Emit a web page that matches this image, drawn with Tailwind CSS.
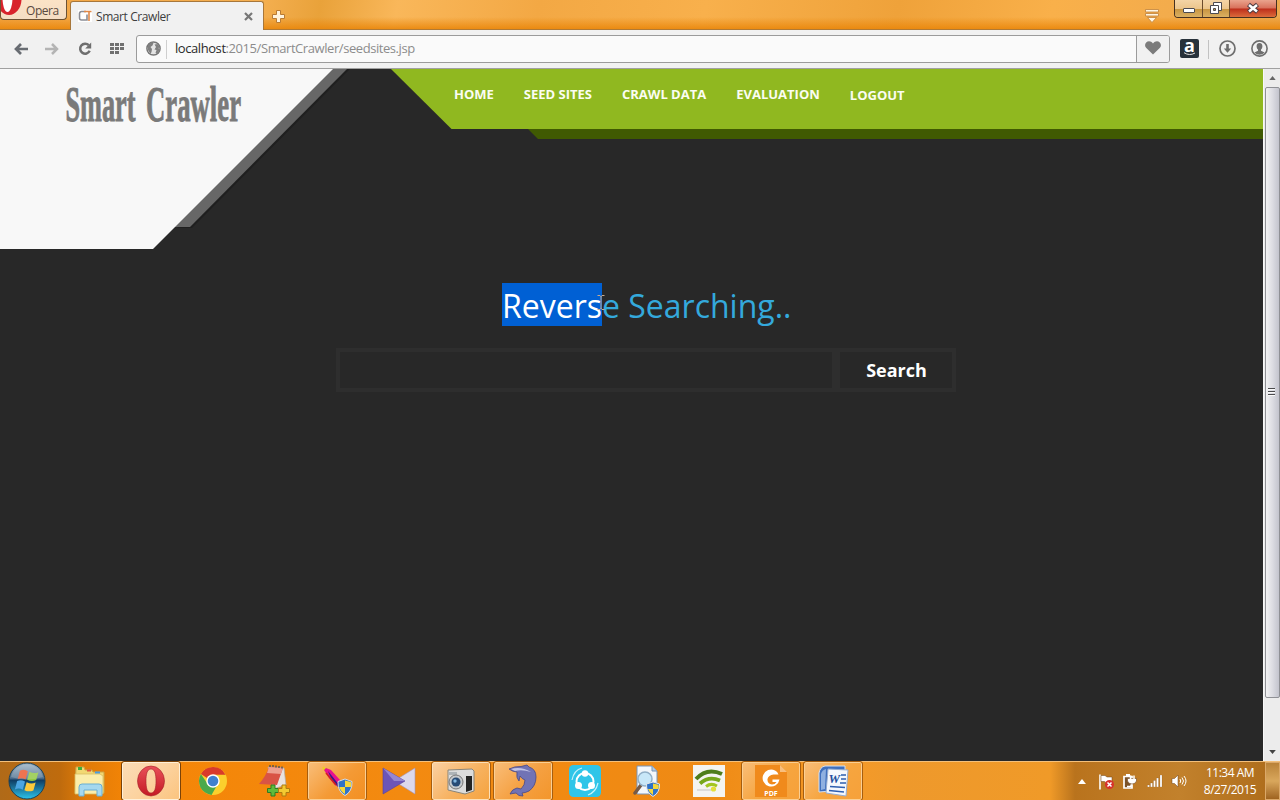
<!DOCTYPE html>
<html lang="en">
<head>
<meta charset="utf-8">
<title>Smart Crawler</title>
<script src="https://cdn.jsdelivr.net/npm/@tailwindcss/browser@4"></script>
</head>
<body class="w-[1280px] h-[800px] overflow-hidden flex flex-col bg-[#282828] font-['Open_Sans','Noto_Sans',sans-serif]">

<!-- Title bar -->
<header class="h-[30px] shrink-0 flex items-start border-b border-[#b07a35] bg-[linear-gradient(100deg,#f2a544_0%,#f5b052_20%,#e9a23a_25%,#f9b75a_31%,#f3a844_42%,#f8b04c_55%,#efa23a_70%,#f9b04a_82%,#eda84e_100%)] relative">
  <div class="absolute inset-x-0 bottom-0 h-[12px] bg-linear-to-b from-[#ee8c14]/0 to-[#e98508]/85"></div>
  <div class="relative w-[67px] h-[20px] rounded-b-[4px] border border-t-0 border-[#6d5233] bg-linear-to-b from-[#fbe3c6] to-[#f4ddc3] overflow-hidden flex items-center">
    <svg class="w-[22px] h-[20px] shrink-0" viewBox="0 0 22 20"><ellipse cx="8" cy="-1" rx="12.500" ry="16" fill="#d8232c"/><ellipse cx="6.500" cy="-2" rx="5" ry="14" fill="#fff"/></svg>
    <span class="text-[12px] leading-[20px] ml-[3px] mt-[2px] tracking-[-0.45px] text-[#5a4a40]">Opera</span>
  </div>
  <div class="relative ml-[3px] mt-[1px] w-[194px] h-[29px] rounded-t-[3px] border border-b-0 border-[#a8773a] bg-[#f1f1f1] flex items-center">
    <svg class="ml-[7px] w-[14px] h-[12px] shrink-0" viewBox="0 0 14 12"><path fill="#fff" d="M0 0h14v12H0z"/><path d="M8 1.500H3.500a2 2 0 0 0-2 2v4.500a2 2 0 0 0 2 2H9V4.500" fill="none" stroke="#8b8d95" stroke-width="1.600"/><path d="M6 1.500h7.500M11 1.500v9.500" fill="none" stroke="#e08948" stroke-width="1.600"/></svg>
    <span class="ml-[4px] text-[12px] leading-[16px] tracking-[-0.42px] text-[#3d3d3d] whitespace-nowrap mt-[2px]">Smart Crawler</span>
    <svg class="ml-auto mr-[10px] w-[9px] h-[9px]" viewBox="0 0 9 9"><path d="M1 1l7 7M8 1L1 8" stroke="#777" stroke-width="2.200"/></svg>
  </div>
  <svg class="relative ml-[8px] mt-[10px] w-[13px] h-[13px]" viewBox="0 0 13 13"><path d="M4.500 .5h4v4h4v4h-4v4h-4v-4h-4v-4h4z" fill="#fff3dc" stroke="#b87b34"/></svg>
  <svg class="relative ml-auto mt-[8px] mr-[14px] w-[16px] h-[16px]" viewBox="0 0 16 16"><path d="M1.500 1.500h13v2.500h-13zM1.500 5.500h13v2.500h-13zM3.500 9.500h9L8 14.500z" fill="#fff6e2" stroke="#c08238" stroke-width=".8"/></svg>
  <div class="relative mr-[3px] w-[103px] h-[18px] flex rounded-b-[4px] border border-t-0 border-[#47301f] overflow-hidden">
    <div class="w-[28px] border-r border-[#6b4b2c] bg-[linear-gradient(#f4d4a6_0,#ecc58c_50%,#c7943f_52%,#dbb063_100%)] flex justify-center"><svg class="w-[14px] h-[17px]" viewBox="0 0 14 17"><rect x="1.500" y="8.500" width="11" height="4" rx=".5" fill="#fff" stroke="#4c4a50"/></svg></div>
    <div class="w-[27px] border-r border-[#6b4b2c] bg-[linear-gradient(#f4d4a6_0,#ecc58c_50%,#c7943f_52%,#dbb063_100%)] flex justify-center"><svg class="w-[14px] h-[17px]" viewBox="0 0 14 17"><path d="M4.500 2.500h8v8h-8z" fill="#fff" stroke="#4c4a50"/><path d="M1.500 5.500h8v8h-8z" fill="#fff" stroke="#4c4a50"/><path d="M4.500 8.500h2v2h-2z" fill="#c7943f" stroke="#4c4a50"/></svg></div>
    <div class="flex-1 bg-[linear-gradient(#eaa48d_0,#d8705a_48%,#bd2e1b_52%,#dc6b3b_100%)] flex justify-center"><svg class="w-[14px] h-[17px]" viewBox="0 0 14 17"><path d="M2.500 4.500L11.500 12M11.500 4.500L2.500 12" stroke="#4c3a40" stroke-width="4.600"/><path d="M3 5L11 11.500M11 5L3 11.500" stroke="#fff" stroke-width="2.600"/></svg></div>
  </div>
</header>

<!-- Address toolbar -->
<div class="h-[39px] shrink-0 bg-[#f1f1f1] border-b border-[#a0a0a0] flex items-center relative">
  <svg class="ml-[14px] w-[14px] h-[12px]" viewBox="0 0 14 12"><path d="M14 6H3M7 1L2 6l5 5" fill="none" stroke="#686c72" stroke-width="2.700"/></svg>
  <svg class="ml-[17px] w-[14px] h-[12px]" viewBox="0 0 14 12"><path d="M0 6h11M7 1l5 5-5 5" fill="none" stroke="#b4b4b4" stroke-width="2.500"/></svg>
  <svg class="ml-[19px] w-[14px] h-[14px]" viewBox="0 0 14 14"><path d="M10.800 3.200A5 5 0 1 0 11.700 8.800" fill="none" stroke="#6e6e6e" stroke-width="2.500"/><path d="M13.200 .5v6H7.200z" fill="#6e6e6e"/></svg>
  <svg class="ml-[18px] w-[14px] h-[12px]" viewBox="0 0 14 12" fill="#707070"><path d="M0 0h4v3H0zM5 0h4v3H5zM10 0h4v3h-4zM0 4h4v3H0zM5 4h4v3H5zM10 4h4v3h-4zM0 8h4v3H0zM5 8h4v3H5z"/></svg>
  <div class="ml-[12px] w-[1034px] h-[28px] rounded-[3px] border border-[#9b9b9b] bg-[#fafafa] flex items-center overflow-hidden">
    <svg class="ml-[9px] w-[15px] h-[15px] shrink-0 mt-[-2px]" viewBox="0 0 15 15"><circle cx="7.500" cy="7.500" r="6.600" fill="#e4e4e4" stroke="#777" stroke-width="1.500"/><path d="M2 4l3-2.500 2.500.5-1 2.500L4.500 6l1.500 2-.5 3-1 2L2 9zM8.500 3.500l3-.5L14 6l-1.500 1L14 9l-3 4-1.500-1 1-3-2-.5 1.500-2.500z" fill="#808080"/></svg>
    <div class="ml-[5px] w-px h-[19px] bg-[#cfcfcf]"></div>
    <div class="ml-[8px] text-[13px] leading-[18px] tracking-[-0.43px] text-[#8c8c8c] whitespace-nowrap mt-[-2px]"><span class="text-[#2a2a2a]">localhost</span>:2015/SmartCrawler/seedsites.jsp</div>
    <div class="ml-auto w-[33px] h-full border-l border-[#9b9b9b] bg-[#f1f1f1] flex items-center justify-center"><svg class="w-[16px] h-[14px] mt-[-2px]" viewBox="0 0 16 14"><path d="M8 13.500L1.300 7A4.200 4.200 0 0 1 1.200 1.500C3 -.3 6.200 0 8 2.500 9.800 0 13 -.3 14.800 1.500A4.200 4.200 0 0 1 14.700 7z" fill="#7b7b7b"/></svg></div>
  </div>
  <div class="ml-[10px] w-[19px] h-[19px] rounded-[2px] bg-[#28323b] relative flex justify-center text-white font-bold text-[18px] leading-[13px] mt-[-1px]">a
    <svg class="absolute left-[3px] bottom-[2px] w-[13px] h-[4px]" viewBox="0 0 13 4"><path d="M1 .7q5.500 3.500 11 .3" fill="none" stroke="#e2e2e2"/></svg></div>
  <div class="ml-[9px] w-px h-[19px] bg-[#c2c2c2]"></div>
  <svg class="ml-[10px] w-[17px] h-[17px] mt-[-1px]" viewBox="0 0 17 17"><circle cx="8.500" cy="8.500" r="7.500" fill="none" stroke="#6e6e6e" stroke-width="1.700"/><path d="M7.200 4h2.600v4.500h2.400L8.500 12.700 4.800 8.500h2.400z" fill="#6e6e6e"/></svg>
  <svg class="ml-[15px] w-[17px] h-[17px] mt-[-1px]" viewBox="0 0 17 17"><circle cx="8.500" cy="8.500" r="7.600" fill="#f1f1f1" stroke="#6e6e6e" stroke-width="1.600"/><path d="M8.500 3C6.300 3 5.600 4.300 5.600 6.200c0 1.600.6 2.800 1.400 3.400v1.200l-3.600 1.700a6.800 6.800 0 0 0 10.200 0L10 10.800V9.600c.8-.6 1.400-1.800 1.400-3.400C11.400 4.300 10.700 3 8.500 3z" fill="#6e6e6e"/></svg>
</div>

<!-- Web page and scrollbar -->
<div class="h-[692px] shrink-0 flex">
  <main class="relative w-[1263px] h-full bg-[#282828] overflow-hidden">
    <svg class="absolute inset-0 w-[1263px] h-[181px]" viewBox="0 0 1263 181">
      <path d="M332 0h18L192 159h-15z" fill="#1f1f1f"/>
      <path d="M330 0h17L190 158h-17z" fill="#676767"/>
      <path d="M0 0h333L153 180H0z" fill="#f8f8f8"/>
      <path d="M527 59h736v11H538z" fill="#405a02"/>
      <path d="M391 0h872v60H451.500z" fill="#90b820"/>
      <g font-family="'Liberation Serif',serif" font-weight="700" font-size="50" fill="#7a7a7a" stroke="#7a7a7a" stroke-width=".9">
        <text x="65.500" y="51.500" textLength="70" lengthAdjust="spacingAndGlyphs">Smart</text>
        <text x="146" y="51.500" textLength="95" lengthAdjust="spacingAndGlyphs">Crawler</text>
      </g>
    </svg>
    <nav class="relative flex h-[60px] pl-[454px] pt-[16px] gap-[30px] text-[13px] leading-[18px] font-bold text-[#fbfdf2] whitespace-nowrap">
      <a>HOME</a><a>SEED SITES</a><a>CRAWL DATA</a><a>EVALUATION</a><a class="mt-px">LOGOUT</a>
    </nav>
    <h1 class="relative mt-[154px] pl-[502px] flex text-[32px] leading-[43px] text-[#34a9dc] whitespace-nowrap"><span class="bg-[#0060d4] text-white h-[43px] leading-[45px]">Revers</span><span class="leading-[45px] h-[43px]">e Searching..</span>
      <svg class="absolute left-[597px] top-[11px] w-[8px] h-[17px]" viewBox="0 0 8 17"><path d="M.5 1.500h2.500l1 1 1-1h2.500M4 2v13M.5 15.500h2.500l1-1 1 1h2.500" fill="none" stroke="#c9a98c"/></svg>
    </h1>
    <form class="flex ml-[336px] mt-[22px]">
      <div class="w-[500px] h-[44px] border-4 border-[#2e2e2e]"></div>
      <div class="w-[120px] h-[44px] border-4 border-[#2e2e2e] text-white font-bold text-[18px] leading-[36px] text-center pl-px">Search</div>
    </form>
  </main>
  <aside class="w-[17px] h-full bg-[#ececec] border-l border-[#f8f8f8] flex flex-col items-center">
    <svg class="w-[7px] h-[18px]" viewBox="0 0 7 18"><path d="M.3 11L3.500 7l3.200 4z" fill="#666"/></svg>
    <div class="w-[15px] h-[611px] rounded-[2px] border border-[#8f9095] bg-linear-to-r from-[#f2f2f3] via-[#dcdce2] to-[#c3c4cd] flex items-center justify-center">
      <svg class="w-[7px] h-[9px] -ml-[2px] -mt-[2px]" viewBox="0 0 7 9"><path d="M0 1.500h7M0 4.500h7M0 7.500h7" stroke="#4b4b4d"/><path d="M0 2.500h7M0 5.500h7M0 8.500h7" stroke="#fafafa"/></svg>
    </div>
    <svg class="mt-auto w-[7px] h-[18px]" viewBox="0 0 7 18"><path d="M.2 7h6.600L3.500 11z" fill="#444"/></svg>
  </aside>
</div>

<!-- Taskbar -->
<footer class="h-[39px] shrink-0 flex items-stretch border-t border-[#f3c07c] bg-[linear-gradient(90deg,#b06a18_0,#bf6b0d_60px,#e07b08_85px,#f58506_130px,#f38a10_400px,#ef8a14_700px,#f59a28_850px,#ee992c_900px,#f09a28_1050px,#b9731d_1075px,#c2812c_1180px,#b06f1d_1262px,#a9681c_1280px)]">
  <div class="w-[59px] flex items-center pl-[8px]">
    <svg class="w-[38px] h-[38px]" viewBox="0 0 38 38">
      <defs><linearGradient id="orb" x1="0" y1="0" x2="0" y2="1"><stop offset="0" stop-color="#9db4c6"/><stop offset=".42" stop-color="#50718f"/><stop offset=".48" stop-color="#0f3c63"/><stop offset="1" stop-color="#2bc4ea"/></linearGradient></defs>
      <circle cx="19" cy="19" r="18" fill="url(#orb)" stroke="#1c4055" stroke-width="1"/>
      <g transform="translate(-1.500 -2.500) scale(1.120)"><path d="M12 10q4-2 7 .5l-2 7.300q-3.500-2-7-.3z" fill="#e9562b"/><path d="M20.500 11q4 2 8 .3l-2 7q-4 2-8-.3z" fill="#8fc741"/><path d="M9.500 19.300q3.500-1.800 7 .4l-2 7.300q-3.500-2-7-.2z" fill="#4ba5e2"/><path d="M18 20.300q4 2.200 8 .3l-2 7q-4 1.800-8-.2z" fill="#fcc93a"/></g>
      <path d="M3 15a16.500 16.500 0 0 1 32 0q-16 5-32 0z" fill="#fff" opacity=".18"/>
    </svg>
  </div>
  <div class="w-[62px] flex items-center justify-center">
    <svg class="w-[34px] h-[32px]" viewBox="0 0 34 32"><path d="M3 2h8l1 3h7l1 2h11v21H2z" fill="#f2d873" stroke="#caa548"/><path d="M2 9h25l3 2v18H2z" fill="#fbedaa" stroke="#d9bd60" stroke-width=".8"/><path d="M5 2h4v3H5z" fill="#3fae3c"/><path d="M14 4.500h4v2h-4z" fill="#dd5640"/><path d="M22 6.500h5v2h-5z" fill="#4b9ce0"/><path d="M6 31v-9q0-3 3-3h17q3 0 3 3v9h-5v-6H11v6z" fill="#a5d8ef" stroke="#6aaed2"/></svg>
  </div>
  <div class="w-[62px] pl-px"><div class="w-[58px] h-[38px] rounded-[2px] border border-[#fff0d8] outline outline-[#7a4208] bg-[linear-gradient(135deg,#fbdcb6,#fcd3a0_50%,#fbc47f)] flex items-center justify-center">
    <svg class="w-[28px] h-[32px]" viewBox="0 0 28 32"><defs><linearGradient id="op" x1="0" y1="0" x2="0" y2="1"><stop offset="0" stop-color="#e9525a"/><stop offset="1" stop-color="#c41a24"/></linearGradient></defs><path fill-rule="evenodd" d="M14 1a13.500 15 0 1 0 0 30 13.500 15 0 1 0 0-30zM14 4c3.800 0 5 5 5 12s-1.200 12-5 12-5-5-5-12 1.200-12 5-12z" fill="url(#op)" stroke="#a5232a" stroke-width=".6"/></svg></div></div>
  <div class="w-[62px] flex items-center justify-center pr-[2px]">
    <svg class="w-[30px] h-[30px]" viewBox="0 0 30 30"><circle cx="15" cy="15" r="14" fill="#fbd02d"/><path d="M2.900 8A14 14 0 0 1 27.500 8.700L15 8.700 9 12z" fill="#d93a2b"/><path d="M2.900 8A14 14 0 0 0 13.500 29l6-10.500-9.500 0z" fill="#4aa94b"/><circle cx="15" cy="15" r="6.700" fill="#fff"/><circle cx="15" cy="15" r="5.300" fill="#3f80cf"/></svg>
  </div>
  <div class="w-[62px] flex items-center justify-center pr-[4px]">
    <svg class="w-[32px] h-[34px]" viewBox="0 0 32 34"><path d="M10 3l16 1 2 17-13 4z" fill="#e9e2df" stroke="#aaa" stroke-width=".7"/><path d="M11 3l14 1-6 17-18-1q7-8 10-17z" fill="#d95345"/><path d="M11 3l14 1-2 6-14-1z" fill="#eda090"/><path d="M12 3v-2m3 2v-2m3 2.500v-2m3 2.500v-2m3 2.500v-2" stroke="#555" stroke-width="1.500"/><path d="M13 21h4v3.500h3.500v4H17V32h-4v-3.500H9.500v-4H13z" fill="#5fbb3b" stroke="#2f7a23"/><path d="M24 21h4v3.500h3.500v4H28V32h-4v-3.500h-3.500v-4H24z" fill="#f3ca32" stroke="#ae7b10"/></svg>
  </div>
  <div class="w-[62px] pl-px"><div class="w-[58px] h-[38px] rounded-[2px] border border-[#fbcf93] outline outline-[#a65d0e] bg-[linear-gradient(135deg,#f9bd78,#f49a35_55%,#f39022)] flex items-center justify-center">
    <svg class="w-[32px] h-[32px]" viewBox="0 0 32 32"><path d="M2 2l3 5M5 3l4 7" stroke="#e6d61b" stroke-width="2"/><path d="M3 5l2-2 5 2 9 10 2 8-7-3Q7 13 3 5z" fill="#e8108f"/><path d="M7 6l12 15-2 1Q9 13 7 6z" fill="#3a1a88"/><path d="M5 8l10 12" stroke="#d2231e" stroke-width="1.500"/><path d="M24 14l7 2.500q.5 10-7 14-7.500-4-7-14z" fill="#2e73c8" stroke="#ddd"/><path d="M24 15.500V22h6q.4-3 0-5zM24 22v7q-4.500-2.500-5.700-7z" fill="#f4d73b"/></svg></div></div>
  <div class="w-[62px] flex items-center justify-center pr-[2px]">
    <svg class="w-[34px] h-[30px]" viewBox="0 0 34 30"><path d="M33 2v26L12 15z" fill="#dcd8ec" stroke="#a394bd" stroke-width=".6"/><path d="M1 2l22 13L1 28z" fill="#6c55b8" stroke="#57419b" stroke-width=".6"/><path d="M1 2l22 13H12z" fill="#9586d0"/></svg>
  </div>
  <div class="w-[62px] pl-px"><div class="w-[58px] h-[38px] rounded-[2px] border border-[#fde0b8] outline outline-[#a65d0e] bg-[linear-gradient(135deg,#fad0a2,#f7b260_55%,#f5a33f)] flex items-center justify-center">
    <svg class="w-[30px] h-[28px]" viewBox="0 0 30 28"><path d="M2 3l24-1 2 2v20l-9 3L2 23z" fill="#dcdcdc" stroke="#8a8578"/><path d="M20 9h6v14l-6 2z" fill="#242424"/><path d="M3 5h8v3H3z" fill="#aeb4b8"/><circle cx="10" cy="15" r="7" fill="#c4c8cc" stroke="#787878"/><circle cx="10" cy="15" r="4.500" fill="#264a75"/><circle cx="9" cy="14" r="1.700" fill="#82b6e0"/></svg></div></div>
  <div class="w-[62px] pl-px"><div class="w-[58px] h-[38px] rounded-[2px] border border-[#fbcf93] outline outline-[#a65d0e] bg-[linear-gradient(135deg,#f9bd78,#f5a041_55%,#f3962c)] flex items-center justify-center">
    <svg class="w-[30px] h-[34px]" viewBox="0 0 30 34"><path d="M1 5Q7 2 13 2.500L19 1l2 2q7 2 7 10 0 9-7 14-4 2-7 2l1 3-4-.5-3-2.500-6 1q2-5 7-6l4 1q4-4 4-9-3-1-5-4l-1 5q-3-3-2-9Q5 8 1 5z" fill="#7173b5" stroke="#45478a" stroke-width=".8"/><path d="M3 5q10-3 20 3-9-3-16-1z" fill="#c3c4e6"/></svg></div></div>
  <div class="w-[62px] flex items-center justify-center pr-[2px]">
    <svg class="w-[32px] h-[32px]" viewBox="0 0 32 32"><rect width="32" height="32" rx="4.500" fill="#2fc5e8"/><circle cx="16" cy="16.500" r="8.500" fill="none" stroke="#fff" stroke-width="2"/><circle cx="16" cy="8.500" r="3.200" fill="#fff"/><circle cx="9.500" cy="20.500" r="3.500" fill="#fff"/><circle cx="22.500" cy="20.500" r="3.500" fill="#fff"/><path d="M3 15Q5 5 13 3M29 18q-2 9-10 12" fill="none" stroke="#c8f2fb" stroke-width="1.200"/></svg>
  </div>
  <div class="w-[62px] flex items-center justify-center pr-[2px]">
    <svg class="w-[28px] h-[32px]" viewBox="0 0 28 32"><path d="M4 1h15l5 5v23H4z" fill="#f3f7fb" stroke="#7694b8"/><path d="M19 1v5h5" fill="#b6cce2" stroke="#7694b8"/><path d="M8 20l-6 8" stroke="#765a46" stroke-width="3.500" stroke-linecap="round"/><circle cx="12" cy="14" r="7" fill="#c8e7f8" stroke="#91afc7" stroke-width="1.500"/><path d="M20 17l6.500 2q.5 8.500-6.500 12.500-7-4-6.500-12.500z" fill="#2e73c8" stroke="#e6e6e6"/><path d="M20 18.500V24h5.500q.5-3 0-4.200zM20 24v6q-4-2.500-5-6z" fill="#f4d73b"/></svg>
  </div>
  <div class="w-[62px] flex items-center justify-center pr-[2px]">
    <svg class="w-[32px] h-[32px]" viewBox="0 0 32 32"><path fill="#f4f4f1" d="M0 0h32v32H0z"/><path d="M3 14Q14 2 29 9" fill="none" stroke="#4e7d1c" stroke-width="4"/><path d="M7 18.500q9-8 20-3" fill="none" stroke="#76a71c" stroke-width="3.700"/><path d="M13 21.500q5-4 11-.5" fill="none" stroke="#a3c51f" stroke-width="3"/><circle cx="20.500" cy="24" r="2.600" fill="#e3df3a"/><path d="M4 25h14" stroke="#c4c4c4"/></svg>
  </div>
  <div class="w-[62px] pl-px"><div class="w-[58px] h-[38px] rounded-[2px] border border-[#fbcf93] outline outline-[#a65d0e] bg-[linear-gradient(135deg,#f9bd78,#f6a53f_55%,#f6a13a)] flex items-center justify-center">
    <svg class="w-[32px] h-[32px]" viewBox="0 0 32 32"><path d="M0 0h25l7 7v25H0z" fill="#f08a1c"/><path d="M25 0v7h7z" fill="#f9bf7d"/><path d="M20 5.500a8.500 8.500 0 1 0 4.500 9h-7v2.500h4q-1.500 2.500-4.500 2.500-5-.5-4.500-5.500 1-4 6-4.500h5q-1-3-3.500-4z" fill="#fff"/><text x="16" y="30.500" text-anchor="middle" font-family="'Open Sans',sans-serif" font-weight="700" font-size="7" fill="#fff">PDF</text></svg></div></div>
  <div class="w-[62px] pl-px"><div class="w-[58px] h-[38px] rounded-[2px] border border-[#fbcf93] outline outline-[#a65d0e] bg-[linear-gradient(135deg,#f9bd78,#f6a53f_55%,#f6a13a)] flex items-center justify-center">
    <svg class="w-[32px] h-[32px]" viewBox="0 0 32 32"><path d="M8 1h20v24l-26 2V8q1-6 6-7z" fill="#3f6fbd" stroke="#d3e0f2"/><path d="M4 9q1-4 5-5l-1 20-4 1z" fill="#8fb0e0"/><path d="M11 4l20 1-2 26-20-3z" fill="#f5f8fd" stroke="#96add0"/><path d="M24 10h5M24 14h5M23 18h6M13 21.500l15 1M12 25.500l15 1.500" stroke="#2f5faf" stroke-width="1.600"/><text x="11.500" y="18" font-family="'Liberation Serif',serif" font-style="italic" font-weight="700" font-size="13" fill="#244f9e">W</text></svg></div></div>
  <div class="ml-auto flex items-center">
    <svg class="w-[8px] h-[5px] mr-[12px]" viewBox="0 0 8 5"><path d="M0 5l4-5 4 5z" fill="#fff"/></svg>
    <svg class="w-[17px] h-[17px] mr-[7px]" viewBox="0 0 17 17"><path d="M2 1.500v15" stroke="#fff" stroke-width="1.600"/><path d="M3 2.500h4l2 1.500h5v6H8L6.500 8.500H3z" fill="#fff" stroke="#6d4218" stroke-width=".5"/><circle cx="11.500" cy="11.500" r="4.500" fill="#d8322c"/><path d="M9.500 9.500l4 4m0-4l-4 4" stroke="#fff" stroke-width="1.500"/></svg>
    <svg class="w-[16px] h-[17px] mr-[9px]" viewBox="0 0 16 17"><path d="M2 3.500h8v11.500H2z" fill="#7c5328" stroke="#fff" stroke-width="1.700"/><path d="M4 1h4v2H4z" fill="#fff"/><path d="M5.500 5.500h9v2.500q-1 3-4.500 3T5.500 8z" fill="#fff" stroke="#6d4218" stroke-width=".6"/><path d="M8.500 6V2.500M12 6V2.500M9 11.500v2H5" fill="none" stroke="#fff" stroke-width="1.500"/></svg>
    <svg class="w-[16px] h-[12px] mr-[8px]" viewBox="0 0 15 12"><path d="M0 10h2v2H0zM3 8h2v4H3zM6 5.500h2V12H6zM9 3h2v9H9zM12.500 0h2v12h-2z" fill="#fff" stroke="#6d4218" stroke-width=".2"/></svg>
    <svg class="w-[16px] h-[14px] mr-[8px]" viewBox="0 0 16 14"><path d="M1 4.500h2.500L7 1v12L3.500 9.500H1z" fill="#fff" stroke="#6d4218" stroke-width=".5"/><path d="M9 5q1.500 2 0 4M11 3.500q3 3.500 0 7M13 2q4 5 0 10" fill="none" stroke="#fff"/></svg>
    <div class="w-[70px] text-center text-white text-[12px] leading-[17px] tracking-[-0.5px] whitespace-nowrap"><div>11:34 AM</div><div>8/27/2015</div></div>
    <div class="w-[15px] h-[38px] border border-[#dba868] bg-linear-to-b from-[#b98238] via-[#d9a75c] to-[#9f641f]"></div>
  </div>
</footer>
</body>
</html>
